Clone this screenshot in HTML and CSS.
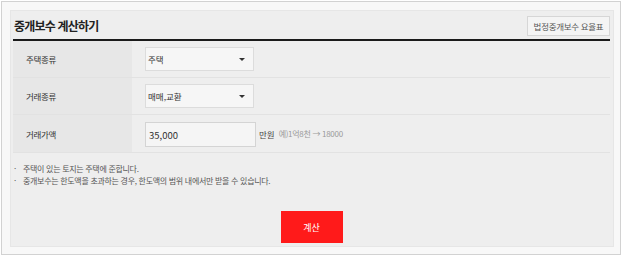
FILE: index.html
```html
<!DOCTYPE html>
<html lang="ko">
<head>
    <meta charset="UTF-8">
    <meta name="viewport" content="width=device-width, initial-scale=1.0">
    <title>중개보수 계산하기</title>
    <link rel="stylesheet" href="styles.css">
</head>
<body>
    <div class="frame">
        <div class="panel">
            <div class="head">
                <h2>중개보수 계산하기</h2>
                <button class="rate-btn">법정중개보수 요율표</button>
            </div>

            <div class="form">
                <div class="row">
                    <div class="label">주택종류</div>
                    <div class="value">
                        <div class="select"><span>주택</span><i class="arrow"></i></div>
                    </div>
                </div>
                <div class="row">
                    <div class="label">거래종류</div>
                    <div class="value">
                        <div class="select"><span>매매,교환</span><i class="arrow"></i></div>
                    </div>
                </div>
                <div class="row">
                    <div class="label">거래가액</div>
                    <div class="value">
                        <input type="text" class="price" value="35,000">
                        <span class="unit">만원</span>
                        <span class="hint">예)1억8천 → 18000</span>
                    </div>
                </div>
            </div>

            <ul class="notes">
                <li>주택이 있는 토지는 주택에 준합니다.</li>
                <li>중개보수는 한도액을 초과하는 경우, 한도액의 범위 내에서만 받을 수 있습니다.</li>
            </ul>

            <div class="actions">
                <button class="calc-btn">계산</button>
            </div>
        </div>
    </div>
</body>
</html>
```

FILE: styles.css
```css
* {
    box-sizing: border-box;
}
body {
    margin: 0;
    background-color: #fff;
    font-family: "Noto Sans CJK KR", "Noto Sans", sans-serif;
    color: #333;
}
.frame {
    margin: 1px 2px 0 1px;
    height: 254px;
    border: 1px solid #d2d2d2;
    background-color: #f8f8f8;
    padding: 8px 6px 7px 8px;
}
.panel {
    height: 100%;
    background-color: #eeeeee;
    border: 1px solid #e6e6e6;
    padding: 0 3px 0 2px;
}
.head {
    display: flex;
    justify-content: space-between;
    align-items: center;
    height: 30px;
    border-bottom: 2px solid #1a1a1a;
    padding: 0 0 0 1px;
}
.head h2 {
    margin: 0;
    font-size: 12px;
    font-weight: bold;
    color: #222;
    letter-spacing: -0.8px;
}
.rate-btn {
    height: 20px;
    width: 83px;
    margin-top: 2px;
    padding: 0;
    border: 1px solid #d6d6d6;
    background-color: #f4f4f4;
    font-family: inherit;
    font-size: 8.5px;
    color: #555;
    letter-spacing: -0.3px;
}
.row {
    display: flex;
    height: 37px;
    border-bottom: 1px solid #e2e2e2;
}
.row:last-child {
    height: 38px;
}
.label {
    width: 119px;
    background-color: #e7e7e7;
    padding-left: 13px;
    font-size: 8.5px;
    color: #333;
    display: flex;
    align-items: center;
    letter-spacing: -0.3px;
}
.value {
    flex: 1;
    display: flex;
    align-items: center;
    padding-left: 13px;
    font-size: 9px;
}
.select {
    width: 109px;
    height: 24px;
    border: 1px solid #dcdcdc;
    background-color: #f6f6f6;
    display: flex;
    align-items: center;
    justify-content: space-between;
    padding: 0 8px 0 2px;
    font-size: 8.5px;
    color: #333;
}
.arrow {
    width: 0;
    height: 0;
    border-left: 3px solid transparent;
    border-right: 3px solid transparent;
    border-top: 3px solid #333;
}
.price {
    width: 111px;
    height: 25px;
    margin: 2px 0 0 0;
    border: 1px solid #d4d4d4;
    background-color: #f5f5f5;
    padding: 0 3px;
    font-family: inherit;
    font-size: 9.5px;
    color: #333;
}
.unit {
    margin-left: 3px;
    color: #444;
    font-size: 8.5px;
}
.hint {
    margin-left: 4px;
    color: #9a9a9a;
    font-size: 8px;
    letter-spacing: -0.3px;
}
.notes {
    list-style: none;
    margin: 10px 0 0 0;
    padding: 0;
    font-size: 8px;
    line-height: 12px;
    color: #555;
    letter-spacing: -0.3px;
}
.notes li::before {
    content: "·";
    display: inline-block;
    width: 9px;
    padding-left: 1px;
}
.actions {
    display: flex;
    justify-content: center;
    margin-top: 24px;
}
.calc-btn {
    width: 62px;
    height: 32px;
    border: none;
    background-color: #ff1a1a;
    color: #fff;
    font-family: inherit;
    font-size: 9px;
    padding: 0;
}
```
